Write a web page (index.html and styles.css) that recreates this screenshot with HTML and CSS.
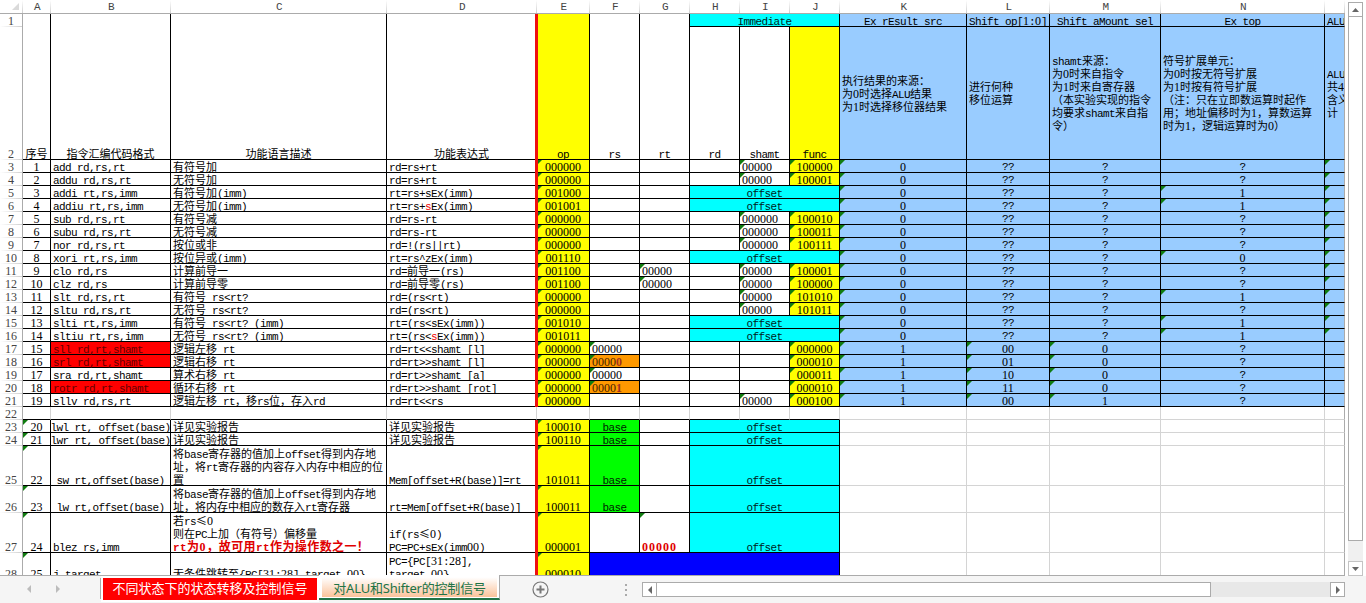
FILE: index.html
```html
<!DOCTYPE html>
<html lang="zh-CN">
<head>
<meta charset="utf-8">
<title>指令控制信号表</title>
<link rel="stylesheet" href="styles.css">
</head>
<body>
<div class="app">
  <div class="workspace">
    <div class="pane"><div class="grid" id="grid"></div></div>
    <div class="vscroll">
      <div class="sbtn"><svg width="7" height="4"><path d="M0 4L3.5 0L7 4Z"/></svg></div>
      <div class="vthumb"></div>
      <div class="vtrack"></div>
      <div class="sbtn light"><svg width="7" height="4"><path d="M0 0L3.5 4L7 0Z"/></svg></div>
    </div>
  </div>
  <div class="bar">
    <div class="nav">
      <svg width="4" height="8"><path d="M4 0V8L0 4Z"/></svg>
      <svg width="4" height="8"><path d="M0 0V8L4 4Z"/></svg>
    </div>
    <div class="tab red">不同状态下的状态转移及控制信号</div>
    <div class="tab active"><span>对ALU和Shifter的控制信号</span></div>
    <svg class="add" width="17" height="17"><circle cx="8.5" cy="8.5" r="7.5"/><path d="M4.5 8.5H12.5M8.5 4.5V12.5"/></svg>
    <div class="dots"><i></i><i></i><i></i></div>
    <div class="hscroll">
      <div class="sbtn"><svg width="4" height="8"><path d="M4 0V8L0 4Z"/></svg></div>
      <div class="hthumb"></div>
      <div class="htrack"></div>
      <div class="sbtn"><svg width="4" height="8"><path d="M0 0V8L4 4Z"/></svg></div>
    </div>
  </div>
</div>
<script src="sheet.js"></script>
</body>
</html>
```

FILE: styles.css
```css
* { box-sizing: border-box; }
body { margin: 0; background: #f5f5f5; overflow: hidden; }
.app { width: 1366px; height: 603px; display: flex; flex-direction: column; }
.workspace { height: 576px; display: flex; gap: 3px; background: #fff; }
.pane {
  width: 1345px; height: 576px; overflow: hidden;
  border-bottom: 1px solid #ababab;
}
.grid {
  display: grid;
  grid-template-columns: 23px 28px 120px 216px 150px 53px 50px 50px 50px 50px 50px 127px 83px 111px 164px 20px;
  grid-template-rows: 14px 13px 133px repeat(22, 13px) 40px 27px 40px 27px;
  font-family: "Liberation Mono", "Noto Sans CJK SC", monospace;
  font-size: 11px; line-height: 13px; letter-spacing: -0.6px;
  color: #000; white-space: pre;
}
.cell {
  position: relative; min-width: 0; min-height: 0;
  display: flex; align-items: flex-end; justify-content: center;
  border-right: 1px solid #000; border-bottom: 1px solid #000;
}
.cell > span { margin-bottom: -3px; }
.cell > .query { margin-bottom: -2px; }
.left { justify-content: flex-start; padding-left: 2px; }
.middle { align-items: center; }
.middle > span { margin: 4px 0 0; }
.blank { border-color: #d4d4d4; }
.under { border-bottom-color: #000; }
.edge { border-right-color: #ababab; overflow: hidden; }
.colhead {
  border-right: 0; border-bottom: 1px solid #ababab; color: #444;
  background: linear-gradient(#fff, #cfcfcf) right / 1px 100% no-repeat;
}
.colhead > span { margin-bottom: -1px; }
.rowhead {
  border-bottom: 0; border-right-color: #ababab; color: #444;
  background: linear-gradient(90deg, #fff, #cfcfcf) bottom / 100% 1px no-repeat;
}
.rowhead > span { margin-bottom: -2px; }
.corner { justify-content: flex-end; padding: 0 4px 3px 0; }
.corner path { fill: #dadada; }
.yellow { background-color: #ff0; }
.cyan { background-color: #0ff; color: #022; }
.sky { background-color: #9cf; }
.lime { background-color: #0f0; color: #020; }
.blue { background-color: #00f; }
.orange { background-color: #f90; color: #420; }
.redfill { background-color: #f00; color: #600; }
.stroke::before {
  content: ""; position: absolute; z-index: 2;
  left: -2px; top: 0; bottom: -1px; width: 3px; background: #ee1010;
}
.flag::after {
  content: ""; position: absolute; left: 0; top: 0;
  width: 5px; height: 5px;
  background: #107c10; clip-path: polygon(0 0, 100% 0, 0 100%);
}
.cjk { font-family: "Noto Sans CJK SC", sans-serif; font-size: 11px; letter-spacing: 0; line-height: 1px; vertical-align: 0.5px; }
.num { font-family: "Liberation Serif", serif; font-size: 12px; letter-spacing: 0; line-height: 1px; }
.accent { color: #e00; font-weight: normal; }
.dark-accent { color: #a33020; font-weight: bold; }
.strong { color: #e00000; font-weight: bold; letter-spacing: 0.4px; }
.strong .cjk { font-size: 12px; letter-spacing: 0.4px; }
.strong .num { letter-spacing: 1px; }

.vscroll { width: 15px; height: 576px; padding-top: 2px; display: flex; flex-direction: column; }
.sbtn {
  flex: none; width: 15px; height: 15px; border: 1px solid #ababab; background: #fff;
  display: flex; align-items: center; justify-content: center;
}
.sbtn path { fill: #666; }
.light { border-color: #c4c4c4; }
.vthumb { height: 525px; margin-top: -1px; border: 1px solid #ababab; background: #fff; }
.vtrack { height: 20px; background: #f0f0f0; }

.bar { height: 27px; background: #f5f5f5; display: flex; align-items: flex-start; }
.nav { width: 101px; height: 21px; margin-top: 2px; padding: 7px 0 0 27px; display: flex; gap: 25px; border-right: 1px solid #ababab; }
.nav path { fill: #bcbcbc; }
.tab {
  font: 13px/20px "Noto Sans", "Noto Sans CJK SC", sans-serif;
  white-space: nowrap; text-align: center;
}
.red { width: 218px; height: 26px; border: 2px solid #fff; background: #f00; color: #fff; line-height: 21px; }
.active {
  width: 181px; height: 25px; margin-top: -1px; padding: 0 2px 0 3px; background: #fff;
  border-right: 1px solid #ababab; border-bottom: 2px solid #217346; color: #217346;
}
.active span {
  display: block; height: 22px; padding-top: 3px; letter-spacing: -0.2px;
  background: linear-gradient(#fff 10%, #fbc39b);
}
.add { margin: 5px 0 0 32px; fill: none; stroke: #777; stroke-width: 1.2; }
.add path { stroke-width: 2; }
.dots { width: 2px; margin: 8px 0 0 76px; display: flex; flex-direction: column; gap: 3px; }
.dots i { width: 2px; height: 2px; background: #aaa; }
.hscroll { width: 703px; margin: 6px 0 0 15px; display: flex; }
.hthumb { width: 555px; height: 15px; margin-left: -1px; border: 1px solid #ababab; background: #fff; }
.htrack { width: 119px; height: 15px; background: #e8e8e8; }
```

FILE: sheet.js
```js
const grid = document.getElementById('grid');
const LETTERS = 'ABCDEFGHIJKLMNO';

// Wraps full-width characters and digits so each keeps its own pitch.
function markup(text) {
  const marks = { '{r}': '<b class="accent">', '{/r}': '</b>',
    '{d}': '<b class="dark-accent">', '{/d}': '</b>', '{s}': '<b class="strong">', '{/s}': '</b>' };
  return text.split(/(\{\/?[rds]\})/).map(part => marks[part] ||
    part.replace(/&/g, '&amp;').replace(/</g, '&lt;').replace(/>/g, '&gt;')
      .replace(/[\u2264\u3000-\u9fff\uff00-\uffef]+|[0-9]+/g,
        m => `<span class="${/[0-9]/.test(m[0]) ? 'num' : 'cjk'}">${m}</span>`)).join('');
}

function put(col, row, text, cls = '', cspan = 1, rspan = 1) {
  const el = document.createElement('div');
  el.className = 'cell ' + cls;
  el.style.gridArea = `${row + 1} / ${LETTERS.indexOf(col) + 2} / span ${rspan} / span ${cspan}`;
  if (text) el.innerHTML = `<span${text[0] === '?' ? ' class="query"' : ''}>${markup(text)}</span>`;
  grid.appendChild(el);
}

grid.innerHTML = '<div class="cell colhead corner"><svg width="7" height="7"><path d="M7 0V7H0Z"/></svg></div>';
for (const c of LETTERS) put(c, 0, c === 'O' ? '' : c, 'colhead');
for (let r = 1; r <= 28; r++) {
  const el = document.createElement('div');
  el.className = 'cell rowhead';
  el.style.gridArea = `${r + 1} / 1`;
  el.innerHTML = `<span>${markup(String(r))}</span>`;
  grid.appendChild(el);
}

put('A', 1, '序号', '', 1, 2);
put('B', 1, '指令汇编代码格式', '', 1, 2);
put('C', 1, '功能语言描述', '', 1, 2);
put('D', 1, '功能表达式', '', 1, 2);
put('E', 1, 'op', 'yellow stroke', 1, 2);
put('F', 1, 'rs', '', 1, 2);
put('G', 1, 'rt', '', 1, 2);
put('H', 1, 'Immediate', 'cyan', 3);
put('H', 2, 'rd');
put('I', 2, 'shamt');
put('J', 2, 'func', 'yellow');
put('K', 1, 'Ex rEsult src', 'sky');
put('L', 1, 'Shift op[1:0]', 'sky');
put('M', 1, 'Shift aMount sel', 'sky');
put('N', 1, 'Ex top', 'sky');
put('O', 1, 'ALU', 'sky left edge');
put('K', 2, '执行结果的来源：\n为0时选择ALU结果\n为1时选择移位器结果', 'sky left middle');
put('L', 2, '进行何种\n移位运算', 'sky left middle');
put('M', 2, 'shamt来源：\n为0时来自指令\n为1时来自寄存器\n（本实验实现的指令\n均要求shamt来自指\n令）', 'sky left middle');
put('N', 2, '符号扩展单元：\n为0时按无符号扩展\n为1时按有符号扩展\n（注：只在立即数运算时起作\n用；地址偏移时为1，算数运算\n时为1，逻辑运算时为0）', 'sky left middle');
put('O', 2, 'ALU\n共4\n含义\n计', 'sky left middle edge');

// code, description, expression, op, rs, rt, shamt, func (null = offset), K, L, M, N
const rows = [
  ['add rd,rs,rt', '有符号加', 'rd=rs+rt', '000000', '', '', '00000', '100000', '0', '??', '?', '?'],
  ['addu rd,rs,rt', '无符号加', 'rd=rs+rt', '000000', '', '', '00000', '100001', '0', '??', '?', '?'],
  ['addi rt,rs,imm', '有符号加(imm)', 'rt=rs+sEx(imm)', '001000', '', '', '', null, '0', '??', '?', '1'],
  ['addiu rt,rs,imm', '无符号加(imm)', 'rt=rs+{r}s{/r}Ex(imm)', '001001', '', '', '', null, '0', '??', '?', '1'],
  ['sub rd,rs,rt', '有符号减', 'rd=rs-rt', '000000', '', '', '000000', '100010', '0', '??', '?', '?'],
  ['subu rd,rs,rt', '无符号减', 'rd=rs-rt', '000000', '', '', '000000', '100011', '0', '??', '?', '?'],
  ['nor rd,rs,rt', '按位或非', 'rd=!(rs||rt)', '000000', '', '', '000000', '100111', '0', '??', '?', '?'],
  ['xori rt,rs,imm', '按位异或(imm)', 'rt=rs^zEx(imm)', '001110', '', '', '', null, '0', '??', '?', '0'],
  ['clo rd,rs', '计算前导一', 'rd=前导一(rs)', '001100', '', '00000', '00000', '100001', '0', '??', '?', '?'],
  ['clz rd,rs', '计算前导零', 'rd=前导零(rs)', '001100', '', '00000', '00000', '100000', '0', '??', '?', '?'],
  ['slt rd,rs,rt', '有符号 rs<rt?', 'rd=(rs<rt)', '000000', '', '', '00000', '101010', '0', '??', '?', '1'],
  ['sltu rd,rs,rt', '无符号 rs<rt?', 'rd=(rs<rt)', '000000', '', '', '00000', '101011', '0', '??', '?', '?'],
  ['slti rt,rs,imm', '有符号 rs<rt? (imm)', 'rt=(rs<sEx(imm))', '001010', '', '', '', null, '0', '??', '?', '1'],
  ['sltiu rt,rs,imm', '无符号 rs<rt? (imm)', 'rt=(rs<{r}s{/r}Ex(imm))', '001011', '', '', '', null, '0', '??', '?', '1'],
  ['sll rd,rt,shamt', '逻辑左移 rt', 'rd=rt<<shamt [l]', '000000', '00000', '', '', '000000', '1', '00', '0', '?'],
  ['srl rd,rt,shamt', '逻辑右移 rt', 'rd=rt>>shamt [l]', '000000', '0000{d}0{/d}', '', '', '000010', '1', '01', '0', '?'],
  ['sra rd,rt,shamt', '算术右移 rt', 'rd=rt>>shamt [a]', '000000', '00000', '', '', '000011', '1', '10', '0', '?'],
  ['rotr rd,rt,shamt', '循环右移 rt', 'rd=rt>>shamt [rot]', '000000', '0000{d}1{/d}', '', '', '000010', '1', '11', '0', '?'],
  ['sllv rd,rs,rt', '逻辑左移 rt，移rs位，存入rd', 'rd=rt<<rs', '000000', '', '', '00000', '000100', '1', '00', '1', '?'],
];
const flag = v => (/\d/.test(v) ? ' flag' : '');
rows.forEach((d, i) => {
  const r = i + 3;
  put('A', r, String(i + 1));
  put('B', r, d[0], 'left' + ([17, 18, 20].includes(r) ? ' redfill' : ''));
  put('C', r, d[1], 'left');
  put('D', r, d[2], 'left');
  put('E', r, d[3], 'yellow stroke flag');
  put('F', r, d[4], 'left' + flag(d[4]) + (d[4].includes('{') ? ' orange' : ''));
  put('G', r, d[5], 'left' + flag(d[5]));
  if (d[7] === null) {
    put('H', r, 'offset', 'cyan', 3);
  } else {
    put('H', r, '');
    put('I', r, d[6], 'left' + flag(d[6]));
    put('J', r, d[7], 'yellow flag');
  }
  ['K', 'L', 'M', 'N'].forEach((c, k) => put(c, r, d[8 + k], 'sky' + flag(d[8 + k])));
  put('O', r, '', 'sky edge' + (r < 17 ? ' flag' : ''));
});

for (const c of LETTERS) put(c, 22, '', 'blank' + (c < 'K' ? ' under' : '') + (c === 'O' ? ' edge' : ''));

const lower = [
  ['20', 'lwl rt, offset(base)', '详见实验报告', '详见实验报告', '100010', 'base', ''],
  ['21', 'lwr rt, offset(base)', '详见实验报告', '详见实验报告', '100110', 'base', ''],
  ['22', 'sw rt,offset(base)', '将base寄存器的值加上offset得到内存地\n址，将rt寄存器的内容存入内存中相应的位\n置', 'Mem[offset+R(base)]=rt', '101011', 'base', ''],
  ['23', 'lw rt,offset(base)', '将base寄存器的值加上offset得到内存地\n址，将内存中相应的数存入rt寄存器', 'rt=Mem[offset+R(base)]', '100011', 'base', ''],
  ['24', 'blez rs,imm', '若rs≤0\n则在PC上加（有符号）偏移量\n{s}rt为0，故可用rt作为操作数之一！{/s}', 'if(rs≤0)\nPC=PC+sEx(imm00)', '000001', '', '{s}00000{/s}'],
  ['25', 'j target', '无条件跳转至{PC[31:28],target,00}', 'PC={PC[31:28],\ntarget,00}', '000010'],
];
lower.forEach((d, i) => {
  const r = i + 23;
  put('A', r, d[0], 'flag');
  put('B', r, d[1], r > 26 ? 'left' : '');
  put('C', r, d[2], 'left');
  put('D', r, d[3], 'left');
  put('E', r, d[4], 'yellow stroke flag');
  if (r === 28) {
    put('F', r, '', 'blue', 5);
  } else {
    put('F', r, d[5], d[5] ? 'lime' : '');
    put('G', r, d[6], 'left' + flag(d[6]));
    put('H', r, 'offset', 'cyan', 3);
  }
  for (const c of 'KLMNO') put(c, r, '', 'blank' + (c === 'O' ? ' edge' : ''));
});
```
